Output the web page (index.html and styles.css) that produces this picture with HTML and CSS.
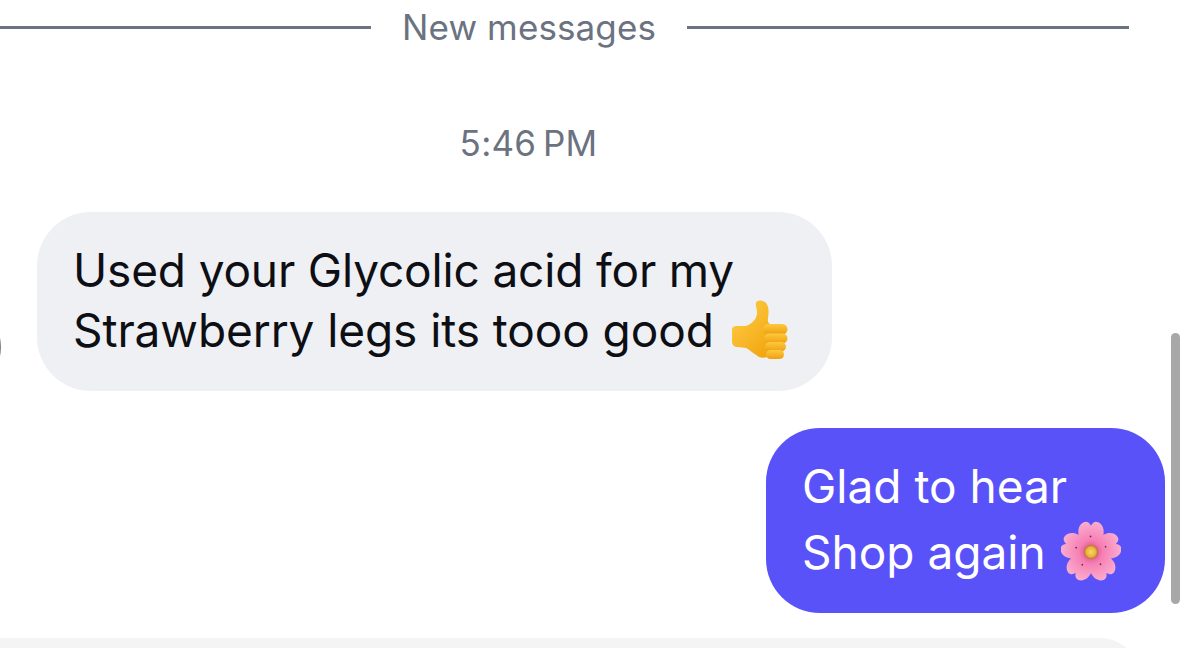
FILE: index.html
```html
<!DOCTYPE html>
<html lang="en">
<head>
<meta charset="utf-8">
<title>Conversation</title>
<link rel="stylesheet" href="styles.css">
</head>
<body>
<main class="thread">
  <div class="divider">
    <span class="divider-line divider-line-start"></span>
    <span class="divider-label">New messages</span>
    <span class="divider-line divider-line-end"></span>
  </div>
  <div class="timestamp">5:46&#8201;PM</div>
  <div class="row row-in">
    <span class="avatar"></span>
    <div class="bubble bubble-in">Used your Glycolic acid for my<br><span class="line-wide">Strawberry legs its tooo good</span>
      <svg class="emoji emoji-thumb" viewBox="0 0 57 60" aria-hidden="true">
        <defs>
          <linearGradient id="thumbFill" x1="0" y1="0" x2="0.8" y2="1">
            <stop offset="0" stop-color="#ffd04a"/>
            <stop offset="1" stop-color="#f2a50f"/>
          </linearGradient>
          <linearGradient id="fingerFill" x1="0" y1="0" x2="0" y2="1">
            <stop offset="0" stop-color="#ffc93c"/>
            <stop offset="1" stop-color="#ee9f12"/>
          </linearGradient>
        </defs>
        <path fill="url(#thumbFill)" d="M1 30C1 27 3 26 6 26L15 26C20 24 25 20 26 14C26.500 9 24 6 25 3C26 0 31 0 34 2C38 5 38 12 37 18C36.500 21 37 23 39 24L42 52C38 57 33 59 28 57C23 54 19 50 15 48L7 47C3 47 1 45 1 41Z"/>
        <rect x="32" y="24" width="24.500" height="10.500" rx="5.200" fill="url(#fingerFill)"/>
        <rect x="33" y="33.500" width="23.500" height="10" rx="5" fill="url(#fingerFill)"/>
        <rect x="34" y="42" width="21" height="9.500" rx="4.700" fill="url(#fingerFill)"/>
        <rect x="35" y="50" width="18" height="9" rx="4.500" fill="url(#fingerFill)"/>
      </svg>
    </div>
  </div>
  <div class="row row-out">
    <div class="bubble bubble-out">Glad to hear<br>Shop again
      <svg class="emoji emoji-flower" viewBox="-31 -32 62 62" aria-hidden="true">
        <defs>
          <radialGradient id="petalFill" gradientUnits="userSpaceOnUse" cx="0" cy="-2" r="30">
            <stop offset="0" stop-color="#d94a84"/>
            <stop offset="0.35" stop-color="#f680b4"/>
            <stop offset="1" stop-color="#fbaed0"/>
          </radialGradient>
          <radialGradient id="heartFill">
            <stop offset="0" stop-color="#f8d768"/>
            <stop offset="0.65" stop-color="#e9b53a"/>
            <stop offset="1" stop-color="#b9683f"/>
          </radialGradient>
        </defs>
        <g>
          <path fill="url(#petalFill)" d="M0 -3C-9 -7 -14 -14 -13 -23C-12 -29 -7 -32 -4 -31C-2 -30.500 -1 -29 0 -27C1 -29 2 -30.500 4 -31C7 -32 12 -29 13 -23C14 -14 9 -7 0 -3Z"/>
          <circle cx="-0.500" cy="-16" r="0.900" fill="#6b2a4e"/>
        </g>
        <g transform="rotate(72)">
          <path fill="url(#petalFill)" d="M0 -3C-9 -7 -14 -14 -13 -23C-12 -29 -7 -32 -4 -31C-2 -30.500 -1 -29 0 -27C1 -29 2 -30.500 4 -31C7 -32 12 -29 13 -23C14 -14 9 -7 0 -3Z"/>
          <circle cx="-0.500" cy="-16" r="0.900" fill="#6b2a4e"/>
        </g>
        <g transform="rotate(144)">
          <path fill="url(#petalFill)" d="M0 -3C-9 -7 -14 -14 -13 -23C-12 -29 -7 -32 -4 -31C-2 -30.500 -1 -29 0 -27C1 -29 2 -30.500 4 -31C7 -32 12 -29 13 -23C14 -14 9 -7 0 -3Z"/>
          <circle cx="-0.500" cy="-16" r="0.900" fill="#6b2a4e"/>
        </g>
        <g transform="rotate(216)">
          <path fill="url(#petalFill)" d="M0 -3C-9 -7 -14 -14 -13 -23C-12 -29 -7 -32 -4 -31C-2 -30.500 -1 -29 0 -27C1 -29 2 -30.500 4 -31C7 -32 12 -29 13 -23C14 -14 9 -7 0 -3Z"/>
          <circle cx="-0.500" cy="-16" r="0.900" fill="#6b2a4e"/>
        </g>
        <g transform="rotate(288)">
          <path fill="url(#petalFill)" d="M0 -3C-9 -7 -14 -14 -13 -23C-12 -29 -7 -32 -4 -31C-2 -30.500 -1 -29 0 -27C1 -29 2 -30.500 4 -31C7 -32 12 -29 13 -23C14 -14 9 -7 0 -3Z"/>
          <circle cx="-0.500" cy="-16" r="0.900" fill="#6b2a4e"/>
        </g>
        <circle r="7.500" fill="url(#heartFill)"/>
      </svg>
    </div>
  </div>
  <div class="composer"></div>
</main>
<div class="scrollbar"></div>
</body>
</html>
```

FILE: styles.css
```css
html, body {
  margin: 0;
  height: 100%;
  background: #fff;
  overflow: hidden;
}

body {
  position: relative;
  font-family: Inter, "Noto Sans", sans-serif;
  color: #0d0f14;
}

.thread {
  display: flex;
  flex-direction: column;
  height: 648px;
  width: 1165px;
  overflow: hidden;
}

.divider {
  display: flex;
  align-items: center;
  gap: 31px;
  width: 1129px;
  height: 54px;
  flex: none;
  color: #6b7280;
  font-size: 35px;
  letter-spacing: 0.12px;
  line-height: 56px;
}

.divider-line {
  height: 3px;
  background: #6b7280;
}

.divider-line-start { width: 371px; flex: none; }
.divider-line-end { flex: 1; }

.timestamp {
  width: 1057px;
  flex: none;
  margin-top: 65px;
  text-align: center;
  color: #6b7280;
  font-size: 35px;
  letter-spacing: 0.25px;
  line-height: 48px;
}

.row {
  display: flex;
  flex: none;
}

.row-in {
  position: relative;
  margin-top: 45px;
  padding-left: 37px;
}

.row-out {
  justify-content: flex-end;
  margin-top: 37px;
}

/* neighbouring avatar, mostly off the left edge */
.avatar {
  position: absolute;
  left: -87px;
  top: 91px;
  width: 88px;
  height: 88px;
  border-radius: 50%;
  background: #85817a;
}

.bubble {
  box-sizing: border-box;
  font-size: 46px;
  letter-spacing: -0.16px;
  border-radius: 54px;
  white-space: nowrap;
}

.bubble-in {
  width: 795px;
  height: 179px;
  padding: 28px 36px;
  background: #eff0f3;
  line-height: 60px;
}

.line-wide {
  letter-spacing: -0.09px;
}

.bubble-out {
  width: 399px;
  height: 185px;
  padding: 25px 36px;
  background: #5a52f9;
  color: #fff;
  letter-spacing: 0;
  line-height: 66px;
}

/* emoji stay out of the line-height calculation */
.emoji {
  display: inline-block;
  margin: -20px 0 -20px 4px;
}

.emoji-thumb {
  width: 57px;
  height: 60px;
  vertical-align: 7px;
}

.emoji-flower {
  width: 60px;
  height: 60px;
  margin-left: 2px;
  vertical-align: 8px;
}

.composer {
  flex: none;
  margin: 25px 0 0 -40px;
  width: 1180px;
  height: 80px;
  border-radius: 40px 40px 0 0;
  background: #f4f4f5;
}

.scrollbar {
  position: absolute;
  left: 1171px;
  top: 333px;
  width: 9px;
  height: 271px;
  border-radius: 5px;
  background: #a8a8a8;
}
```
